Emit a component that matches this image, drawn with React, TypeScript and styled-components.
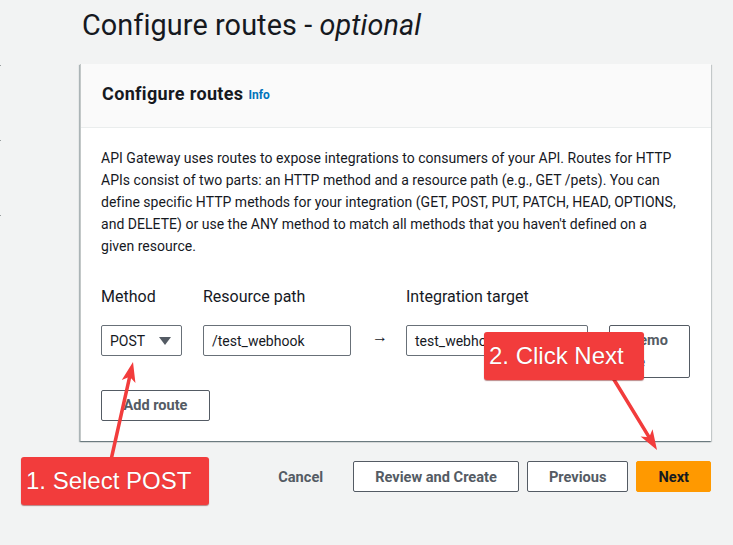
import React from "react";
import styled, { createGlobalStyle } from "styled-components";

const Global = createGlobalStyle`
  html, body { margin: 0; padding: 0; background: #f2f3f3; }
  body { font-family: Roboto, "Open Sans", Arial, sans-serif; color: #16191f; }
  * { box-sizing: border-box; }
`;

const Page = styled.div`
  position: relative;
  width: 733px;
  height: 545px;
  overflow: hidden;
  background: #f2f3f3;
  padding: 6px 22px 0 80px;
`;

const Title = styled.h1`
  margin: 0 0 0 2px;
  font-family: Roboto, "Open Sans", sans-serif;
  font-weight: 400;
  font-size: 28.8px;
  line-height: 38px;
  height: 58px;
  color: #16191f;
  letter-spacing: 0.1px;
  em { font-style: italic; }
`;

const Card = styled.section`
  width: 631px;
  background: #fff;
  box-shadow: 0 1px 1px 0 rgba(0, 28, 36, 0.3), 1px 1px 1px 0 rgba(0, 28, 36, 0.15),
    -1px 1px 1px 0 rgba(0, 28, 36, 0.25);
  border-left: 1px solid #c3c8c8;
`;

const CardHeader = styled.header`
  height: 64px;
  background: #fafafa;
  border-bottom: 1px solid #eaeded;
  display: flex;
  align-items: center;
  padding: 0 20px 4px 21px;
  gap: 5px;
`;

const CardTitle = styled.h2`
  margin: 0;
  font-size: 18px;
  font-weight: 700;
  letter-spacing: 0.35px;
  color: #16191f;
`;

const InfoLink = styled.a`
  font-size: 12px;
  font-weight: 700;
  color: #0073bb;
  text-decoration: none;
  margin-top: 3px;
`;

const CardBody = styled.div`
  padding: 19px 20px 20px 20px;
`;

const Description = styled.p`
  margin: 0;
  font-size: 14px;
  line-height: 22px;
  color: #16191f;
  letter-spacing: 0.02px;
  white-space: nowrap;
`;

const RouteGrid = styled.div`
  display: grid;
  grid-template-columns: 81px 169px 55px 182px 102px;
  margin-top: 29px;
  align-items: start;
`;

const Label = styled.div<{ $pl?: number }>`
  font-size: 16px;
  line-height: 22px;
  color: #16191f;
  padding-left: ${(p) => p.$pl ?? 0}px;
  margin-bottom: 17px;
`;

const Field = styled.div<{ $ml?: number }>`
  margin-left: ${(p) => p.$ml ?? 0}px;
  height: 31px;
  border: 1px solid #687078;
  border-radius: 2px;
  background: #fff;
  display: flex;
  align-items: center;
  justify-content: space-between;
  padding: 0 10px 0 8px;
  font-size: 14px;
  color: #16191f;
  white-space: nowrap;
  overflow: hidden;
`;

const Caret = styled.span`
  width: 0;
  height: 0;
  border-left: 6px solid transparent;
  border-right: 6px solid transparent;
  border-top: 8px solid #545b64;
`;

const ArrowGlyph = styled.div`
  text-align: center;
  font-size: 16px;
  line-height: 24px;
  color: #16191f;
  padding-left: 3px;
`;

const SmallButton = styled.button<{ $ml?: number }>`
  margin-left: ${(p) => p.$ml ?? 0}px;
  width: 109px;
  min-height: 31px;
  border: 1px solid #545b64;
  border-radius: 2px;
  background: #fff;
  color: #545b64;
  font-family: inherit;
  font-size: 14.5px;
  font-weight: 700;
  line-height: 20px;
  padding: 4px 12px;
  margin-top: 12px;
`;

const RemoveButton = styled(SmallButton)`
  width: 81px;
  height: 53px;
  margin-top: 0;
  padding: 4px 18px 4px 20px;
  text-align: left;
  word-break: break-all;
  line-height: 22px;
`;

const Footer = styled.footer`
  display: flex;
  justify-content: flex-end;
  align-items: center;
  gap: 8px;
  width: 631px;
  margin-top: 20px;
`;

const FooterButton = styled.button<{ $variant?: "link" | "normal" | "primary" }>`
  height: 31px;
  border-radius: 2px;
  font-family: inherit;
  font-size: 14.6px;
  font-weight: 700;
  padding: 0 21px;
  cursor: pointer;
  border: 1px solid
    ${(p) => (p.$variant === "primary" ? "#ff9900" : p.$variant === "link" ? "transparent" : "#545b64")};
  background: ${(p) => (p.$variant === "primary" ? "#ff9900" : p.$variant === "link" ? "transparent" : "#fff")};
  color: ${(p) => (p.$variant === "primary" ? "#16191f" : "#545b64")};
`;

const Overlay = styled.svg`
  position: absolute;
  left: 0;
  top: 0;
  pointer-events: none;
`;

const Callout = styled.div<{ $x: number; $y: number; $w: number; $h: number }>`
  position: absolute;
  left: ${(p) => p.$x}px;
  top: ${(p) => p.$y}px;
  width: ${(p) => p.$w}px;
  height: ${(p) => p.$h}px;
  background: #f23c3c;
  border-radius: 3px;
  box-shadow: 0 1px 1px rgba(120, 20, 20, 0.5);
  color: #fff;
  font-family: "Liberation Sans", Arial, sans-serif;
  font-size: 24px;
  line-height: ${(p) => p.$h}px;
  padding-left: 5px;
  white-space: nowrap;
  text-shadow: 0 0 1px rgba(0, 0, 0, 0.25);
`;

const Tick = styled.div<{ $y: number }>`
  position: absolute;
  left: 0;
  top: ${(p) => p.$y}px;
  width: 1px;
  height: 1px;
  background: #9aa0a0;
`;

function Arrow({ x1, y1, x2, y2 }: { x1: number; y1: number; x2: number; y2: number }) {
  const dx = x2 - x1;
  const dy = y2 - y1;
  const len = Math.hypot(dx, dy);
  const ux = dx / len;
  const uy = dy / len;
  const hl = 20;
  const hw = 7;
  const bx = x2 - ux * hl;
  const by = y2 - uy * hl;
  const px = -uy;
  const py = ux;
  const pts = `${x2},${y2} ${bx + px * hw},${by + py * hw} ${bx + ux * 5},${by + uy * 5} ${bx - px * hw},${by - py * hw}`;
  return (
    <g>
      <line x1={x1} y1={y1} x2={bx + ux * 6} y2={by + uy * 6} stroke="#f23c3c" strokeWidth={3.5} strokeLinecap="round" />
      <polygon points={pts} fill="#f23c3c" />
    </g>
  );
}

export default function App() {
  return (
    <>
      <Global />
      <Page>
        <Tick $y={65} />
        <Tick $y={140} />
        <Tick $y={215} />
        <Title>
          Configure routes - <em>optional</em>
        </Title>
        <Card>
          <CardHeader>
            <CardTitle>Configure routes</CardTitle>
            <InfoLink>Info</InfoLink>
          </CardHeader>
          <CardBody>
            <Description>
              API Gateway uses routes to expose integrations to consumers of your API. Routes for HTTP
              <br />
              APIs consist of two parts: an HTTP method and a resource path (e.g., GET /pets). You can
              <br />
              define specific HTTP methods for your integration (GET, POST, PUT, PATCH, HEAD, OPTIONS,
              <br />
              and DELETE) or use the ANY method to match all methods that you haven't defined on a
              <br />
              given resource.
            </Description>
            <RouteGrid>
              <Label>Method</Label>
              <Label $pl={21}>Resource path</Label>
              <div />
              <Label>Integration target</Label>
              <div />
              <Field>
                POST <Caret />
              </Field>
              <Field $ml={21}>/test_webhook</Field>
              <ArrowGlyph>→</ArrowGlyph>
              <Field>test_webhook</Field>
              <RemoveButton $ml={21}>Remove</RemoveButton>
            </RouteGrid>
            <SmallButton>Add route</SmallButton>
          </CardBody>
        </Card>
        <Footer>
          <FooterButton $variant="link">Cancel</FooterButton>
          <FooterButton>Review and Create</FooterButton>
          <FooterButton>Previous</FooterButton>
          <FooterButton $variant="primary">Next</FooterButton>
        </Footer>
        <Overlay width={733} height={545}>
          <Arrow x1={111} y1={460} x2={133} y2={362} />
          <Arrow x1={613} y1={378} x2={657} y2={450} />
        </Overlay>
        <Callout $x={21} $y={457} $w={188} $h={48}>
          1. Select POST
        </Callout>
        <Callout $x={484} $y={332} $w={160} $h={48}>
          2. Click Next
        </Callout>
      </Page>
    </>
  );
}
